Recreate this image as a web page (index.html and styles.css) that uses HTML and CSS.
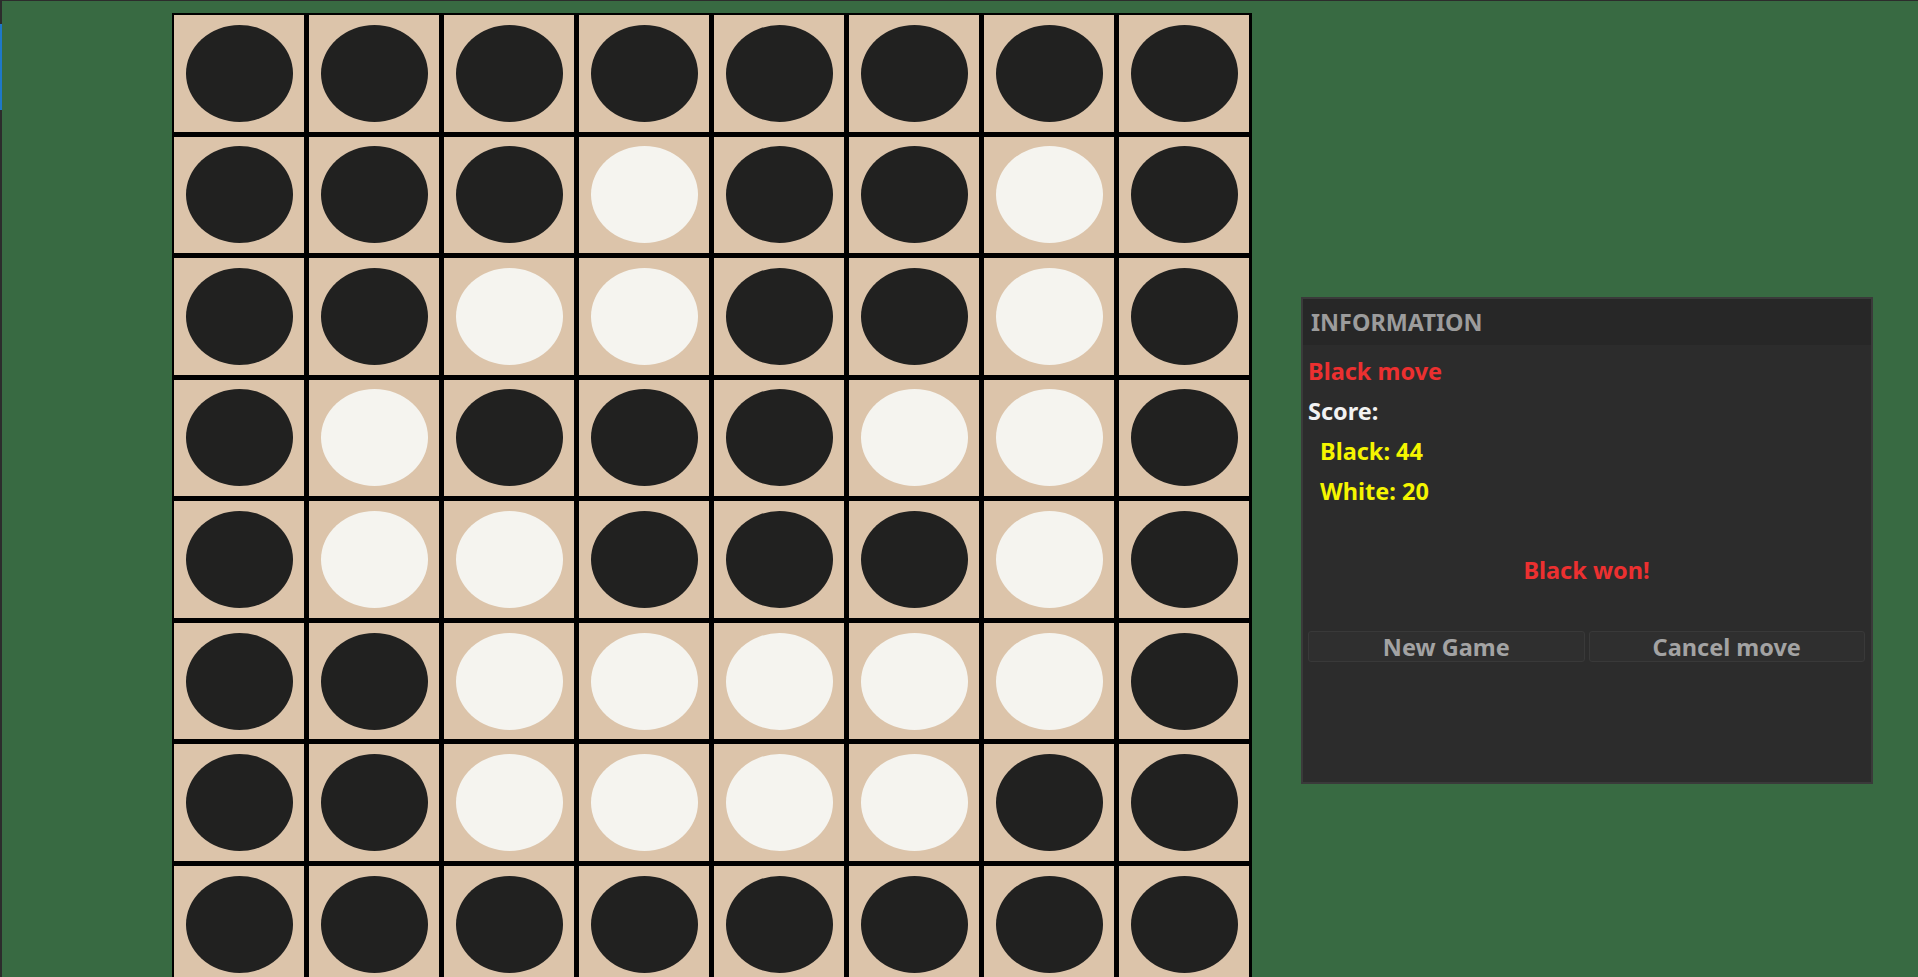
FILE: index.html
```html
<!DOCTYPE html>
<html>
<head>
<meta charset="utf-8">
<title>Reversi</title>
<link rel="stylesheet" href="styles.css">
</head>
<body>
<div class="app">
  <div class="edge"><div class="edge-mark"></div></div>
  <div class="board">
    <div class="cell"><div class="piece b"></div></div><div class="cell"><div class="piece b"></div></div><div class="cell"><div class="piece b"></div></div><div class="cell"><div class="piece b"></div></div><div class="cell"><div class="piece b"></div></div><div class="cell"><div class="piece b"></div></div><div class="cell"><div class="piece b"></div></div><div class="cell"><div class="piece b"></div></div>
    <div class="cell"><div class="piece b"></div></div><div class="cell"><div class="piece b"></div></div><div class="cell"><div class="piece b"></div></div><div class="cell"><div class="piece w"></div></div><div class="cell"><div class="piece b"></div></div><div class="cell"><div class="piece b"></div></div><div class="cell"><div class="piece w"></div></div><div class="cell"><div class="piece b"></div></div>
    <div class="cell"><div class="piece b"></div></div><div class="cell"><div class="piece b"></div></div><div class="cell"><div class="piece w"></div></div><div class="cell"><div class="piece w"></div></div><div class="cell"><div class="piece b"></div></div><div class="cell"><div class="piece b"></div></div><div class="cell"><div class="piece w"></div></div><div class="cell"><div class="piece b"></div></div>
    <div class="cell"><div class="piece b"></div></div><div class="cell"><div class="piece w"></div></div><div class="cell"><div class="piece b"></div></div><div class="cell"><div class="piece b"></div></div><div class="cell"><div class="piece b"></div></div><div class="cell"><div class="piece w"></div></div><div class="cell"><div class="piece w"></div></div><div class="cell"><div class="piece b"></div></div>
    <div class="cell"><div class="piece b"></div></div><div class="cell"><div class="piece w"></div></div><div class="cell"><div class="piece w"></div></div><div class="cell"><div class="piece b"></div></div><div class="cell"><div class="piece b"></div></div><div class="cell"><div class="piece b"></div></div><div class="cell"><div class="piece w"></div></div><div class="cell"><div class="piece b"></div></div>
    <div class="cell"><div class="piece b"></div></div><div class="cell"><div class="piece b"></div></div><div class="cell"><div class="piece w"></div></div><div class="cell"><div class="piece w"></div></div><div class="cell"><div class="piece w"></div></div><div class="cell"><div class="piece w"></div></div><div class="cell"><div class="piece w"></div></div><div class="cell"><div class="piece b"></div></div>
    <div class="cell"><div class="piece b"></div></div><div class="cell"><div class="piece b"></div></div><div class="cell"><div class="piece w"></div></div><div class="cell"><div class="piece w"></div></div><div class="cell"><div class="piece w"></div></div><div class="cell"><div class="piece w"></div></div><div class="cell"><div class="piece b"></div></div><div class="cell"><div class="piece b"></div></div>
    <div class="cell"><div class="piece b"></div></div><div class="cell"><div class="piece b"></div></div><div class="cell"><div class="piece b"></div></div><div class="cell"><div class="piece b"></div></div><div class="cell"><div class="piece b"></div></div><div class="cell"><div class="piece b"></div></div><div class="cell"><div class="piece b"></div></div><div class="cell"><div class="piece b"></div></div>
  </div>
  <div class="panel">
    <div class="panel-header">INFORMATION</div>
    <div class="panel-body">
      <div class="line turn">Black move</div>
      <div class="line score-title">Score:</div>
      <div class="line score">Black: 44</div>
      <div class="line score">White: 20</div>
      <div class="line result">Black won!</div>
      <div class="actions">
        <button class="btn">New Game</button>
        <button class="btn">Cancel move</button>
      </div>
    </div>
  </div>
</div>
</body>
</html>
```

FILE: styles.css
```css
html, body {
  margin: 0;
  padding: 0;
  overflow: hidden;
}
body {
  background: #386a42;
  font-family: "Noto Sans", "Open Sans", sans-serif;
  font-weight: bold;
}
.app {
  display: flex;
  align-items: flex-start;
  height: 976px;
  border-top: 1px solid #2c2c2c;
  overflow: hidden;
}
.edge {
  flex: none;
  align-self: stretch;
  width: 2px;
  background: #2c2c2c;
}
.edge-mark {
  margin-top: 23px;
  height: 86px;
  background: #1e78c8;
}
.board {
  flex: none;
  margin-left: 170px;
  margin-top: 12px;
  display: grid;
  grid-template-columns: repeat(8, 130px);
  grid-template-rows: repeat(8, 116.57px);
  gap: 5px;
  padding: 2px 3px 2px 2px;
  background: #000;
}
.cell {
  background: #dcc4aa;
  display: flex;
  align-items: center;
  justify-content: center;
}
.piece {
  width: 107px;
  height: 97px;
  border-radius: 50%;
}
.piece.b { background: #212120; }
.piece.w { background: #f5f4ef; }
.panel {
  flex: none;
  margin-left: 49px;
  margin-top: 296px;
  width: 572px;
  height: 487px;
  box-sizing: border-box;
  border: 2px solid #3a3a3a;
  background: #2c2c2c;
}
.panel-header {
  height: 46px;
  line-height: 46px;
  padding-left: 8px;
  background: #272727;
  color: #9c9c9c;
  font-size: 23.4px;
}
.panel-body {
  padding: 6px 6px 0 5px;
}
.line {
  font-size: 23.5px;
  line-height: 40px;
}
.turn { color: #ec3030; }
.score-title { color: #f2f2f2; }
.score { color: #f5f500; padding-left: 12px; }
.result {
  color: #ec3030;
  text-align: center;
  margin-top: 39px;
}
.actions {
  display: flex;
  gap: 4px;
  margin-top: 41px;
}
.btn {
  flex: 1;
  height: 31px;
  box-sizing: border-box;
  border: 1px solid #393939;
  border-radius: 3px;
  background: #2f2f2f;
  color: #a3a3a3;
  font-family: "Noto Sans", "Open Sans", sans-serif;
  font-weight: bold;
  font-size: 23.5px;
  line-height: 28px;
  padding: 0;
}
```
